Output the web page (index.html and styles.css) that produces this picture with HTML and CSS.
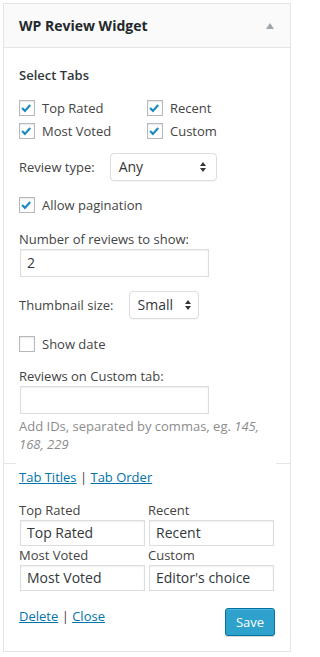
FILE: index.html
```html
<!DOCTYPE html>
<html>
<head>
<meta charset="utf-8">
<link rel="stylesheet" href="styles.css">
</head>
<body>
<div class="widget">
  <div class="w-head">
    <span class="w-title">WP Review Widget</span>
    <svg class="w-toggle" width="8" height="6" viewBox="0 0 8 6"><polygon points="4,0 8,6 0,6" fill="#a0a5aa"/></svg>
  </div>
  <div class="w-body">
    <div class="sec-title">Select Tabs</div>
    <div class="tabs">
      <label class="cb"><span class="box"><svg viewBox="0 0 16 16"><polyline points="3.5,8 6.8,11.3 12.8,4.6" /></svg></span>Top Rated</label>
      <label class="cb"><span class="box"><svg viewBox="0 0 16 16"><polyline points="3.5,8 6.8,11.3 12.8,4.6" /></svg></span>Recent</label>
      <label class="cb"><span class="box"><svg viewBox="0 0 16 16"><polyline points="3.5,8 6.8,11.3 12.8,4.6" /></svg></span>Most Voted</label>
      <label class="cb"><span class="box"><svg viewBox="0 0 16 16"><polyline points="3.5,8 6.8,11.3 12.8,4.6" /></svg></span>Custom</label>
    </div>

    <div class="sel-row r-type">
      <span class="lbl">Review type:</span>
      <span class="sel sel-any"><span class="sel-text">Any</span><svg class="arrows" width="6" height="10" viewBox="0 0 6 10"><polygon points="3,0 6,4 0,4" fill="#32373c"/><polygon points="0,6 6,6 3,10" fill="#32373c"/></svg></span>
    </div>

    <label class="cb single pag"><span class="box"><svg viewBox="0 0 16 16"><polyline points="3.5,8 6.8,11.3 12.8,4.6" /></svg></span>Allow pagination</label>

    <div class="lbl-line num-lbl">Number of reviews to show:</div>
    <div class="inp inp-wide">2</div>

    <div class="sel-row r-thumb">
      <span class="lbl">Thumbnail size:</span>
      <span class="sel sel-small"><span class="sel-text">Small</span><svg class="arrows" width="6" height="10" viewBox="0 0 6 10"><polygon points="3,0 6,4 0,4" fill="#32373c"/><polygon points="0,6 6,6 3,10" fill="#32373c"/></svg></span>
    </div>

    <label class="cb single date"><span class="box empty"></span>Show date</label>

    <div class="lbl-line cust-lbl">Reviews on Custom tab:</div>
    <div class="inp inp-wide"></div>
    <p class="help">Add IDs, separated by commas, eg. <em>145, 168, 229</em></p>

    <div class="sep"><span class="sep-l"></span><span class="sep-m"></span><span class="sep-r"></span></div>

    <div class="tab-links"><a href="#">Tab Titles</a> | <a href="#">Tab Order</a></div>

    <div class="titles">
      <div class="t-cell"><div class="t-lbl">Top Rated</div><div class="inp inp-t">Top Rated</div></div>
      <div class="t-cell"><div class="t-lbl">Recent</div><div class="inp inp-t">Recent</div></div>
      <div class="t-cell"><div class="t-lbl">Most Voted</div><div class="inp inp-t">Most Voted</div></div>
      <div class="t-cell"><div class="t-lbl">Custom</div><div class="inp inp-t">Editor's choice</div></div>
    </div>

    <div class="footer">
      <div class="f-links"><a href="#">Delete</a> | <a href="#">Close</a></div>
      <button class="save">Save</button>
    </div>
  </div>
</div>
</body>
</html>
```
FILE: styles.css
```css
html, body {
  margin: 0;
  padding: 0;
  background: #fff;
}
body {
  font-family: "Open Sans", "Liberation Sans", sans-serif;
  font-size: 13px;
  line-height: 18px;
  color: #444;
}
.widget {
  margin: 3px;
  width: 288px;
  box-sizing: border-box;
  border: 1px solid #e5e5e5;
  background: #fff;
}
.w-head {
  height: 43px;
  background: #fafafa;
  border-bottom: 1px solid #e5e5e5;
  display: flex;
  align-items: center;
  justify-content: space-between;
  padding: 0 16px 0 15px;
}
.w-title {
  font-size: 14px;
  font-weight: 700;
  color: #23282d;
}
.w-toggle {
  display: block;
  margin-top: 1px;
}
.w-body {
  padding: 18px 15px 15px 15px;
}
.sec-title {
  font-weight: 600;
  color: #32373c;
}
.tabs {
  margin-top: 15px;
  display: grid;
  grid-template-columns: 128px 1fr;
  row-gap: 5px;
}
.cb {
  display: flex;
  align-items: center;
  height: 18px;
  color: #444;
}
.box {
  width: 16px;
  height: 16px;
  box-sizing: border-box;
  border: 1px solid #b4b9be;
  background: #fff;
  box-shadow: inset 0 1px 2px rgba(0,0,0,.1);
  margin-right: 7px;
  flex: none;
  display: flex;
}
.box svg {
  width: 14px;
  height: 14px;
  margin: 0 0 0 -1px;
  overflow: visible;
}
.box polyline {
  fill: none;
  stroke: #1e8cbe;
  stroke-width: 2.6;
}
.single {
  width: max-content;
}
.pag { margin-top: 15px; }
.date { margin-top: 16px; }
.sel-row {
  display: flex;
  align-items: center;
  height: 28px;
  gap: 15px;
}
.r-type { margin-top: 13px; }
.r-thumb { margin-top: 14px; }
.sel {
  height: 28px;
  box-sizing: border-box;
  border: 1px solid #ddd;
  border-radius: 4px;
  background: #fff;
  box-shadow: 0 1px 1px rgba(0,0,0,.04);
  display: flex;
  align-items: center;
  justify-content: space-between;
  padding: 0 10px 0 8px;
  font-size: 14px;
  color: #32373c;
}
.sel-any { width: 107px; }
.sel-small { width: 70px; padding-right: 7px; }
.arrows { display: block; }
.lbl-line { line-height: 18px; }
.num-lbl { margin-top: 16px; }
.cust-lbl { margin-top: 14px; }
.inp {
  margin: 1px;
  box-sizing: border-box;
  border: 1px solid #ddd;
  background: #fff;
  box-shadow: inset 0 1px 2px rgba(0,0,0,.07);
  font-size: 14px;
  color: #32373c;
  display: flex;
  align-items: center;
  padding: 0 6px;
}
.inp-wide {
  width: 189px;
  height: 28px;
}
.help {
  margin: 3px 0 0 0;
  color: #8c8c8c;
  line-height: 18px;
}
.help em { font-style: italic; }
.sep {
  margin: 10px -15px 0 -15px;
  display: flex;
  height: 1px;
}
.sep-l { width: 12px; background: #e5e5e5; }
.sep-m { flex: 1; }
.sep-r { width: 14px; background: #e5e5e5; }
.tab-links {
  margin-top: 4px;
  color: #444;
}
a {
  color: #0073aa;
  text-decoration: underline;
}
.titles {
  margin-top: 16px;
  display: grid;
  grid-template-columns: 127px 127px;
  column-gap: 2px;
}
.t-lbl {
  line-height: 17px;
  color: #444;
}
.inp-t {
  height: 26px;
  width: calc(100% - 2px);
  padding: 0 6px;
}
.footer {
  margin-top: 16px;
  display: flex;
  justify-content: space-between;
  align-items: flex-start;
}
.f-links {
  line-height: 18px;
  margin-top: -1px;
}
.save {
  width: 50px;
  height: 28px;
  box-sizing: border-box;
  border: 1px solid #0074a2;
  border-radius: 3px;
  background: #2ea2cc;
  color: #fff;
  font-family: "Open Sans", "Liberation Sans", sans-serif;
  font-size: 13px;
  padding: 0;
  box-shadow: inset 0 1px 0 rgba(120,200,230,.5), 0 1px 0 rgba(0,0,0,.15);
}
```
